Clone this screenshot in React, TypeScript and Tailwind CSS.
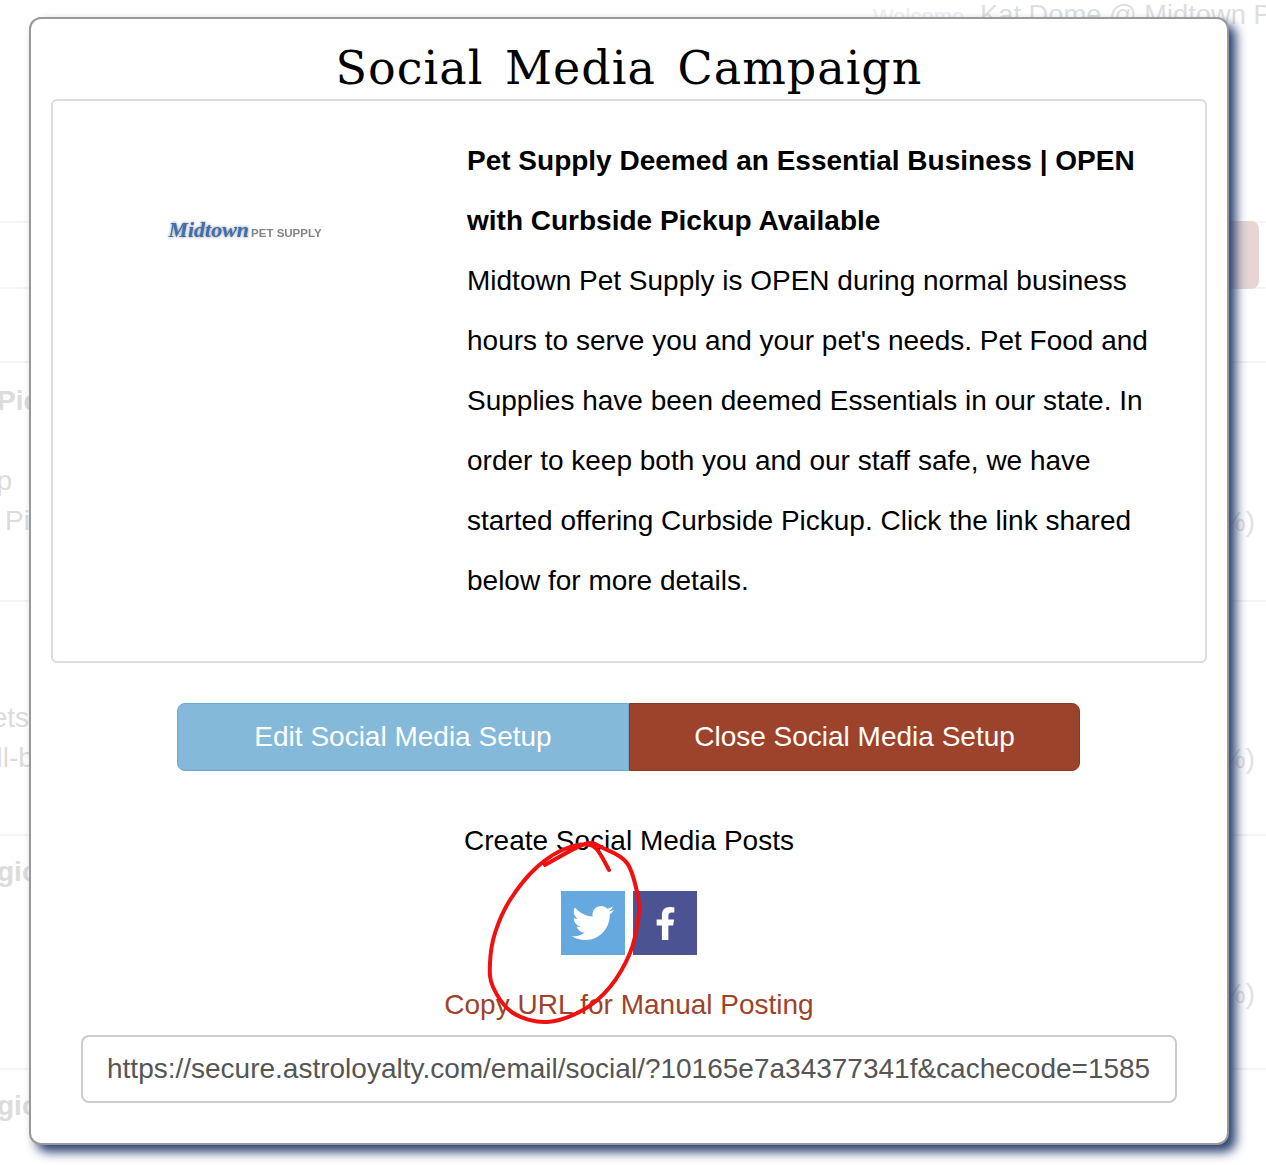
import React from 'react'
import { FaTwitter, FaFacebookF } from 'react-icons/fa'

const sans = "font-['Liberation_Sans',Arial,sans-serif]"

// hand-drawn annotation, traced from the screenshot
const circlePoints: [number, number][] = [
  [545, 865], [585, 844], [603, 848], [627, 863], [638, 897], [638, 920], [630, 953],
  [610, 987], [583, 1010], [547, 1022], [513, 1013], [493, 987], [490, 963], [495, 933],
  [510, 900], [537, 867], [567, 848], [593, 846], [609, 870],
]

const smoothPath = (pts: [number, number][]) => {
  let d = `M${pts[0][0]} ${pts[0][1]}`
  for (let i = 0; i < pts.length - 1; i++) {
    const p0 = pts[Math.max(i - 1, 0)]
    const p1 = pts[i]
    const p2 = pts[i + 1]
    const p3 = pts[Math.min(i + 2, pts.length - 1)]
    const c1x = p1[0] + (p2[0] - p0[0]) / 6
    const c1y = p1[1] + (p2[1] - p0[1]) / 6
    const c2x = p2[0] - (p3[0] - p1[0]) / 6
    const c2y = p2[1] - (p3[1] - p1[1]) / 6
    d += ` C${c1x} ${c1y} ${c2x} ${c2y} ${p2[0]} ${p2[1]}`
  }
  return d
}

const Background = () => (
  <div className={`h-[1165px] overflow-hidden bg-white text-[28px] text-[#dcdcdc] ${sans}`}>
    <div className="h-[223px] overflow-hidden border-b-2 border-[#f6f6f6] pl-[873px]">
      <div className="-mt-[5px] flex items-baseline whitespace-nowrap text-[#dedede]">
        <span className="w-[107px] shrink-0 text-[22px] text-[#eeeeee]">Welcome</span>
        <span className="shrink-0 text-[27.3px]">Kat Dome @ Midtown P</span>
      </div>
    </div>
    <div className="flex h-[66px] justify-end border-b-2 border-[#f4f4f4]">
      <div className="-mt-[2px] mr-[7px] h-[68px] w-[100px] rounded-r-lg bg-[#e6d5d3]" />
    </div>
    <div className="h-[74px] border-b-2 border-[#f4f4f4]" />
    <div className="flex h-[239px] justify-between border-b-2 border-[#f4f4f4]">
      <div className="-ml-[3px] leading-[40px]">
        <div className="mt-[18px] font-bold">Pickup</div>
        <div className="mt-[40px] ml-[-58px]">Setup</div>
        <div className="ml-[8px]">Pickup</div>
      </div>
      <div className="mt-[138px] mr-[11px] text-[#e2e2e2]">(0%)</div>
    </div>
    <div className="flex h-[234px] justify-between border-b-2 border-[#f4f4f4]">
      <div className="leading-[40px]">
        <div className="mt-[96px] ml-[-27px]">Pets</div>
        <div className="ml-[-45px]">Well-being</div>
      </div>
      <div className="mt-[136px] mr-[11px] text-[#e2e2e2]">(0%)</div>
    </div>
    <div className="flex h-[234px] justify-between border-b-2 border-[#f4f4f4]">
      <div className="mt-[15px] -ml-[3px] font-bold">gic</div>
      <div className="mt-[137px] mr-[11px] text-[#e2e2e2]">(0%)</div>
    </div>
    <div className="mt-[15px] -ml-[3px] font-bold">gic</div>
  </div>
)

const App = () => (
  <div className="relative h-[1165px] overflow-hidden">
    <Background />

    <div className={`absolute top-[17px] left-[29px] flex h-[1128px] w-[1200px] flex-col items-center rounded-[12px] border-2 border-[#999999] bg-white px-[20px] shadow-[7px_7px_11px_#2a4070] ${sans}`}>
      <h1 className="mt-[18px] h-[62px] font-['DejaVu_Serif',serif] text-[46px] leading-[62px] tracking-[1px] whitespace-nowrap text-black [word-spacing:6px]">
        Social Media Campaign
      </h1>

      <div className="flex h-[564px] w-full rounded-[6px] border-2 border-[#dddddd] pt-[30px] text-[28px] leading-[60px] text-black">
        <div className="flex w-[414px] shrink-0 justify-center">
          <div className="mt-[87px] ml-[-30px] flex h-6 items-baseline whitespace-nowrap blur-[0.5px]">
            <span className="font-['Liberation_Serif',serif] text-[22px] leading-6 font-bold text-[#3f6fb0] italic [text-shadow:0_0_3px_#777777]">
              Midtown
            </span>
            <span className="ml-[2px] text-[11.5px] leading-6 font-bold text-[#858585]">PET SUPPLY</span>
          </div>
        </div>
        <div className="w-[700px]">
          <p className="font-bold">
            Pet Supply Deemed an Essential Business | OPEN
            <br />
            with Curbside Pickup Available
          </p>
          <p>
            Midtown Pet Supply is OPEN during normal business
            <br />
            hours to serve you and your pet's needs. Pet Food and
            <br />
            Supplies have been deemed Essentials in our state. In
            <br />
            order to keep both you and our staff safe, we have
            <br />
            started offering Curbside Pickup. Click the link shared
            <br />
            below for more details.
          </p>
        </div>
      </div>

      <div className="mt-[40px] mr-[1px] flex h-[68px] w-[903px] text-[28px] text-white">
        <button className="flex w-[452px] items-center justify-center rounded-l-[8px] border border-[#6fa8cf] bg-[#84b9da]">
          Edit Social Media Setup
        </button>
        <button className="flex w-[451px] items-center justify-center rounded-r-[8px] border border-[#8a3822] bg-[#9e432b]">
          Close Social Media Setup
        </button>
      </div>

      <div className="mt-[50px] text-[28px] leading-[40px] text-black">Create Social Media Posts</div>

      <div className="mt-[30px] flex gap-2">
        <div className="flex h-16 w-16 items-center justify-center bg-[#66a8e0] text-white">
          <FaTwitter className="h-[42px] w-[42px] blur-[0.5px]" />
        </div>
        <div className="flex h-16 w-16 items-center justify-center bg-[#4b5393] text-white">
          <FaFacebookF className="h-[33px] w-[33px] blur-[0.5px]" />
        </div>
      </div>

      <div className="mt-[30px] text-[28px] leading-[40px] text-[#9e432b]">Copy URL for Manual Posting</div>

      <div className="mt-[10px] flex h-[68px] w-[1096px] shrink-0 items-center overflow-hidden rounded-[8px] border-2 border-[#cccccc] pl-[24px] text-[28px] whitespace-nowrap text-[#555555]">
        https://secure.astroloyalty.com/email/social/?10165e7a34377341f&amp;cachecode=1585
      </div>
    </div>

    <svg className="pointer-events-none absolute top-0 left-0" width="1266" height="1165" fill="none">
      <path d={smoothPath(circlePoints)} stroke="#f01010" strokeWidth="4" strokeLinecap="round" />
    </svg>
  </div>
)

export default App
